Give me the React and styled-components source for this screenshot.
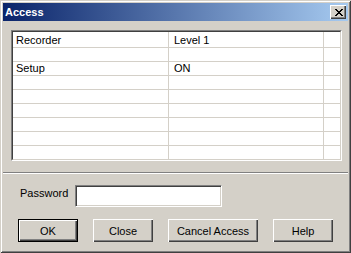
import React from 'react';
import styled, { createGlobalStyle } from 'styled-components';

const Colors = {
  face: '#d4d0c8',
  shadow: '#808080',
  dark: '#404040',
  light: '#ffffff',
  grid: '#d4d0c8',
};

const GlobalStyle = createGlobalStyle`
  html, body {
    margin: 0;
    padding: 0;
    background: ${Colors.face};
  }
  body {
    font-family: "Liberation Sans", Arial, sans-serif;
    font-size: 11px;
    color: #000;
  }
`

const Window = styled.div`
  box-sizing: border-box;
  width: 351px;
  height: 253px;
  padding: 3px;
  background: ${Colors.face};
  box-shadow:
    inset 1px 1px ${Colors.face},
    inset -1px -1px ${Colors.dark},
    inset 2px 2px ${Colors.light},
    inset -2px -2px ${Colors.shadow};
  display: flex;
  flex-direction: column;
`

const TitleBar = styled.div`
  height: 18px;
  display: flex;
  align-items: center;
  justify-content: space-between;
  padding-left: 2px;
  background: linear-gradient(to right, #0a246a, #a6caf0);
`

const TitleText = styled.span`
  color: #fff;
  font-weight: bold;
  font-size: 11px;
  line-height: 13px;
`

const CloseButton = styled.div`
  width: 16px;
  height: 14px;
  margin-right: 2px;
  display: flex;
  align-items: center;
  justify-content: center;
  background: ${Colors.face};
  box-shadow:
    inset 1px 1px ${Colors.light},
    inset -1px -1px ${Colors.dark},
    inset -2px -2px ${Colors.shadow};

  svg {
    display: block;
    margin-left: 1px;
  }
`

const Body = styled.div`
  display: flex;
  flex-direction: column;
`

const ListBox = styled.div`
  box-sizing: border-box;
  width: 331px;
  height: 131px;
  margin: 9px 0 0 8px;
  border-top: 1px solid ${Colors.shadow};
  border-left: 1px solid ${Colors.shadow};
  border-bottom: 1px solid ${Colors.light};
  border-right: 1px solid ${Colors.light};
`

const ListInner = styled.div`
  height: 100%;
  box-sizing: border-box;
  background: #fff;
  overflow: hidden;
  border-top: 1px solid ${Colors.dark};
  border-left: 1px solid ${Colors.dark};
  border-bottom: 1px solid ${Colors.grid};
  border-right: 1px solid ${Colors.grid};
`

const Row = styled.div`
  display: grid;
  grid-template-columns: 156px 155px 1fr;
`

const Cell = styled.div`
  box-sizing: border-box;
  height: ${(p) => (p.$first ? 16 : 14)}px;
  padding: ${(p) => (p.$first ? 2 : 0)}px 0 0 ${(p) => (p.$sub ? 5 : 3)}px;
  line-height: 13px;
  border-bottom: 1px solid ${Colors.grid};
  border-right: ${(p) => (p.$last ? 'none' : `1px solid ${Colors.grid}`)};
  white-space: nowrap;
`

const Separator = styled.div`
  margin-top: 11px;
  height: 0;
  border-top: 1px solid ${Colors.shadow};
  border-bottom: 1px solid ${Colors.light};
`

const PasswordRow = styled.div`
  display: flex;
  align-items: flex-start;
  margin-top: 11px;
  padding-left: 17px;
`

const Label = styled.label`
  width: 55px;
  margin-top: 2px;
  line-height: 13px;
`

const Input = styled.input`
  box-sizing: border-box;
  width: 147px;
  height: 22px;
  margin: 0;
  padding: 2px 4px;
  font: inherit;
  background: #fff;
  border-top: 1px solid ${Colors.shadow};
  border-left: 1px solid ${Colors.shadow};
  border-bottom: 1px solid ${Colors.light};
  border-right: 1px solid ${Colors.light};
  box-shadow:
    inset 1px 1px ${Colors.dark},
    inset -1px -1px ${Colors.face};
  outline: none;
`

const ButtonRow = styled.div`
  display: flex;
  gap: 15px;
  margin-top: 12px;
  padding-left: 15px;
`

const Button = styled.button`
  box-sizing: border-box;
  width: ${(p) => p.$width || 60}px;
  height: 23px;
  padding: 0;
  border: none;
  background: ${Colors.face};
  font-family: "Liberation Sans", Arial, sans-serif;
  font-size: 11px;
  color: #000;
  box-shadow: ${(p) =>
    p.$default
      ? `inset 0 0 0 1px #000, inset 2px 2px ${Colors.light}, inset -2px -2px ${Colors.dark}, inset -3px -3px ${Colors.shadow}`
      : `inset 1px 1px ${Colors.light}, inset -1px -1px ${Colors.dark}, inset -2px -2px ${Colors.shadow}`};
`

const rows = [
  ['Recorder', 'Level 1'],
  ['', ''],
  ['Setup', 'ON'],
  ['', ''],
  ['', ''],
  ['', ''],
  ['', ''],
  ['', ''],
  ['', ''],
];

function App() {
  return (
    <>
      <GlobalStyle />
      <Window>
        <TitleBar>
          <TitleText>Access</TitleText>
          <CloseButton>
            <svg width="8" height="7" viewBox="0 0 8 7" shapeRendering="crispEdges">
              <path d="M0 0H2L4 2.5L6 0H8L5 3.5L8 7H6L4 4.5L2 7H0L3 3.5Z" fill="#000" />
            </svg>
          </CloseButton>
        </TitleBar>

        <Body>
          <ListBox>
            <ListInner>
              {rows.map((r, i) => (
                <Row key={i}>
                  <Cell $first={i === 0}>{r[0]}</Cell>
                  <Cell $first={i === 0} $sub>{r[1]}</Cell>
                  <Cell $first={i === 0} $last />
                </Row>
              ))}
            </ListInner>
          </ListBox>

          <Separator />

          <PasswordRow>
            <Label>Password</Label>
            <Input type="password" />
          </PasswordRow>

          <ButtonRow>
            <Button $default>OK</Button>
            <Button>Close</Button>
            <Button $width={90}>Cancel Access</Button>
            <Button>Help</Button>
          </ButtonRow>
        </Body>
      </Window>
    </>
  );
}

export default App;
